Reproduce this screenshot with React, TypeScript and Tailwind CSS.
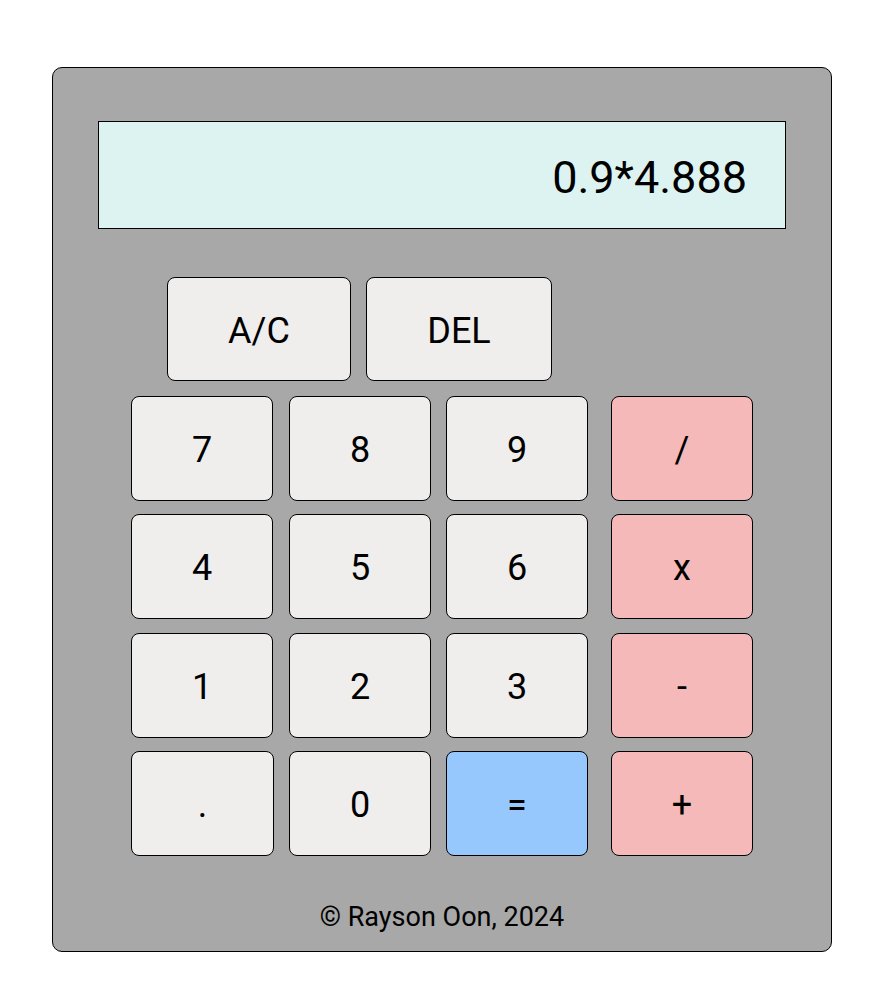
import React from "react";

const light = "bg-[#f0eded]";
const pink = "bg-[#f5b9b9]";
const blue = "bg-[#96c8fe]";

function Key({
  label,
  cls,
  w = "w-[142px]",
  h = "h-[105px]",
}: {
  label: string;
  cls: string;
  w?: string;
  h?: string;
}) {
  return (
    <div
      className={`${w} ${h} ${cls} border border-black rounded-[8px] flex items-center justify-center pt-[3px] text-[36px] text-black`}
    >
      {label}
    </div>
  );
}

function Row({ keys }: { keys: [string, string][] }) {
  const first = keys[0][0] === ".";
  return (
    <div className="flex ml-[78px]">
      <Key label={keys[0][0]} cls={keys[0][1]} w={first ? "w-[143px]" : "w-[142px]"} />
      <div className={first ? "ml-[15px]" : "ml-[16px]"}>
        <Key label={keys[1][0]} cls={keys[1][1]} />
      </div>
      <div className="ml-[15px]">
        <Key label={keys[2][0]} cls={keys[2][1]} />
      </div>
      <div className="ml-[23px]">
        <Key label={keys[3][0]} cls={keys[3][1]} />
      </div>
    </div>
  );
}

export default function App() {
  return (
    <div
      className="w-[886px] h-[997px] bg-white pt-[67px] pl-[52px]"
      style={{ fontFamily: "Roboto, 'Liberation Sans', sans-serif" }}
    >
      <div className="w-[780px] h-[885px] bg-[#a8a8a8] border border-black rounded-[10px] flex flex-col">
        <div className="mt-[53px] mx-[45px] h-[108px] bg-[#ddf3f1] border border-black flex items-center justify-end pr-[38px]">
          <span className="text-[45px] text-black leading-none pt-[4px]">0.9*4.888</span>
        </div>
        <div className="flex mt-[48px] ml-[114px]">
          <Key label="A/C" cls={light} w="w-[184px]" h="h-[104px]" />
          <div className="ml-[15px]">
            <Key label="DEL" cls={light} w="w-[186px]" h="h-[104px]" />
          </div>
        </div>
        <div className="flex flex-col gap-[13.33px] mt-[15px]">
          <Row keys={[["7", light], ["8", light], ["9", light], ["/", pink]]} />
          <Row keys={[["4", light], ["5", light], ["6", light], ["x", pink]]} />
          <Row keys={[["1", light], ["2", light], ["3", light], ["-", pink]]} />
          <Row keys={[[".", light], ["0", light], ["=", blue], ["+", pink]]} />
        </div>
        <div className="flex-1 flex items-center justify-center text-[27px] text-black pt-[27px]">
          © Rayson Oon, 2024
        </div>
      </div>
    </div>
  );
}
